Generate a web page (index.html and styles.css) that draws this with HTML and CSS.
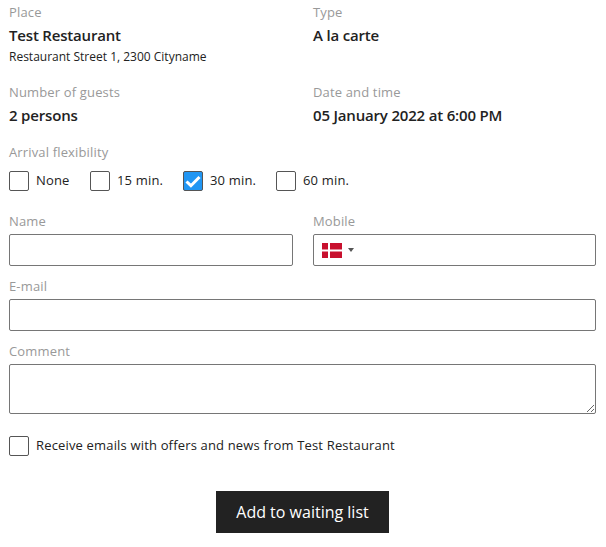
FILE: index.html
```html
<!DOCTYPE html>
<html lang="en">
<head>
<meta charset="utf-8">
<title>Waiting list</title>
<link rel="stylesheet" href="styles.css">
</head>
<body>
<form class="form">
  <div class="row place">
    <div><div class="label">Place</div><div class="value">Test Restaurant</div><div class="address">Restaurant Street 1, 2300 Cityname</div></div>
    <div><div class="label">Type</div><div class="value">A la carte</div></div>
  </div>
  <div class="row details">
    <div><div class="label">Number of guests</div><div class="value">2 persons</div></div>
    <div><div class="label">Date and time</div><div class="value">05 January 2022 at 6:00 PM</div></div>
  </div>
  <div class="label">Arrival flexibility</div>
  <div class="options">
    <label class="check"><span class="box"></span><span class="text">None</span></label>
    <label class="check"><span class="box"></span><span class="text">15 min.</span></label>
    <label class="check"><span class="box checked"><svg viewBox="0 0 18 18"><path d="M2.5 9.5 6.9 13.7 15.5 5"/></svg></span><span class="text">30 min.</span></label>
    <label class="check"><span class="box"></span><span class="text">60 min.</span></label>
  </div>
  <div class="row contact">
    <div><div class="label">Name</div><div class="input"></div></div>
    <div><div class="label">Mobile</div><div class="input phone"><svg class="flag" viewBox="0 0 20 15"><path fill="#c8102e" d="M0 0h20v15H0z"/><path fill="#fff" d="M6 0h2v15H6zM0 6.5h20v2H0z"/></svg><span class="arrow"></span></div></div>
  </div>
  <div class="field"><div class="label">E-mail</div><div class="input"></div></div>
  <div class="field"><div class="label">Comment</div><textarea class="comment"></textarea></div>
  <label class="check offers"><span class="box"></span><span class="text">Receive emails with offers and news from Test Restaurant</span></label>
  <button class="submit" type="button">Add to waiting list</button>
</form>
</body>
</html>
```
FILE: styles.css
```css
* { box-sizing: border-box; }
body { margin: 0; background: #fff; color: #222; font: 13px/20px "Open Sans", sans-serif; }
.form { display: flex; flex-direction: column; padding: 2px 10px 0 9px; }
.row { display: grid; grid-template-columns: 284px 283px; column-gap: 20px; }
.place { height: 80px; }
.details { height: 60px; }
.label { height: 22px; color: #999; letter-spacing: .15px; }
.value { height: 23px; font-size: 15px; line-height: 23px; font-weight: 600; letter-spacing: -.18px; }
.address { padding-top: 1px; font-size: 12px; line-height: 18px; }
.options { display: grid; grid-template-columns: 81px 93px 93px 93px; height: 47px; padding-top: 7px; }
.check { display: flex; align-items: flex-start; gap: 7px; height: 20px; }
.text { margin-top: -1px; letter-spacing: .165px; }
.box { flex: none; width: 20px; height: 20px; border: 1px solid #555; border-radius: 2px; background: #fff; }
.checked { background: #2196f3; }
.box svg { display: block; fill: none; stroke: #fff; stroke-width: 3; }
.contact { height: 65px; }
.input { height: 32px; margin-top: 1px; border: 1px solid #767676; border-radius: 2px; background: #fff; }
.phone { display: flex; align-items: center; padding-left: 8px; }
.flag { width: 20px; height: 15px; }
.arrow { margin-left: 6px; border: 3px solid transparent; border-top: 4px solid #555; border-bottom: 0; }
.field .input { margin-bottom: 10px; }
.comment { display: block; width: 100%; height: 50px; margin: 1px 0 0; padding: 5px; border: 1px solid #767676; border-radius: 2px; resize: vertical; }
.offers { margin-top: 22px; }
.submit { align-self: center; width: 173px; height: 42px; margin-top: 35px; padding: 0; border: 0; background: #222; color: #fff; font: 16px/42px "Open Sans", sans-serif; }
```
